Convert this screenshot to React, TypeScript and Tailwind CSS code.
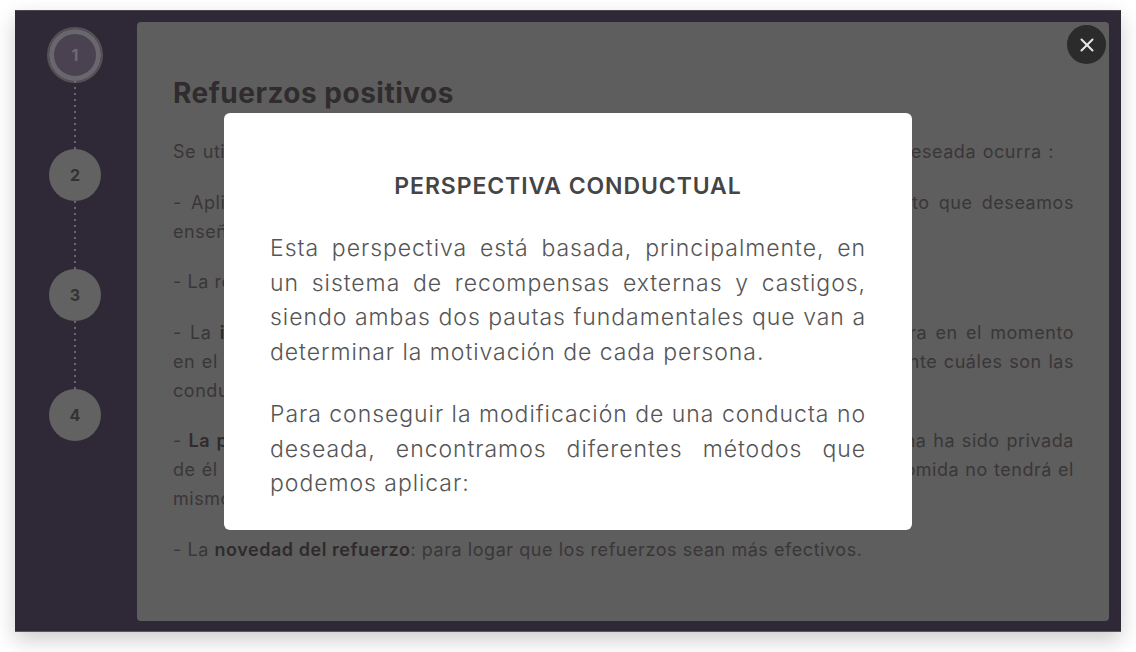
import { X } from 'lucide-react';

const steps = ['1', '2', '3', '4'];

// one entry per printed line, the middle of each one sits behind the modal
const paragraphs: { lines: string[][]; firstWidth?: boolean }[] = [
  { lines: [['Se utilizan para aumentar la probabilidad de que una conducta ya considerada deseada ocurra :']], firstWidth: true },
  {
    lines: [
      ['- Aplicar el refuerzo justo después de que se realice bien la conducta o hábito que deseamos'],
      ['enseñar.'],
    ],
  },
  { lines: [['- La regularidad del refuerzo.']] },
  {
    lines: [
      ['- La ', 'inmediatez', ' del refuerzo: debe darse justo después de la conducta, y ahora en el momento'],
      ['en el que esta sucede, de manera que el niño o la niña comprenda muy claramente cuáles son las'],
      ['conductas deseadas.'],
    ],
  },
  {
    lines: [
      ['- ', 'La privación', ' del refuerzo: el refuerzo será mucho más eficaz cuando la persona ha sido privada'],
      ['de él durante un tiempo; por ejemplo, un dulce para quien acaba de tomar una comida no tendrá el'],
      ['mismo valor.'],
    ],
  },
];

function Line({ parts, className }: { parts: string[]; className: string }) {
  return (
    <div className={className}>
      {parts[0]}
      {parts[1] && <b className="font-semibold text-[#2f2b2c]">{parts[1]}</b>}
      {parts[2]}
    </div>
  );
}

export default function App() {
  return (
    <div className="h-[652px] w-[1136px] overflow-hidden bg-white pt-[10px] pl-[15px] font-['Inter','Liberation_Sans',sans-serif]">
      <div className="relative flex h-[622px] w-[1106px] border-t border-b border-t-[#4c4652] border-b-[#5a5560] bg-[#2f2836] shadow-[0_8px_20px_rgba(0,0,0,0.2)]">
        <aside className="flex w-[120px] flex-col items-center pt-[18px]">
          {steps.map((s, i) => (
            <div key={s} className="flex flex-col items-center">
              {i === 0 ? (
                <div className="flex h-[52px] w-[52px] items-center justify-center rounded-full border-[5px] border-[#6a666d] bg-[#4a4250] text-[16px] font-bold text-[#6e6a72] outline-2 outline-[#565159]">
                  {s}
                </div>
              ) : (
                <div className="flex h-[52px] w-[52px] items-center justify-center rounded-full bg-[#626262] text-[16px] font-bold text-[#333]">
                  {s}
                </div>
              )}
              {i < 3 && (
                <div className="h-[68px] w-[2px] bg-[linear-gradient(#6b666e_2px,transparent_2px)] bg-[length:2px_6px]" />
              )}
            </div>
          ))}
        </aside>

        <main className="mt-[11px] mr-[12px] mb-[10px] ml-[2px] flex-1 rounded-[4px] bg-[#5e5e5e] pt-[53px] pr-[35px] pl-[36px] text-[18px] leading-[29px] tracking-[0.55px] text-[#3a3638]">
          <h1 className="mb-[26px] text-[28px] leading-[36px] font-bold tracking-[0.5px] text-[#302c2d]">Refuerzos positivos</h1>
          <div className="flex flex-col gap-[21.5px]">
            {paragraphs.map((p, i) => (
              <div key={i}>
                {p.lines.map((line, j) => {
                  const last = j === p.lines.length - 1;
                  return (
                    <Line
                      key={j}
                      parts={line}
                      className={p.firstWidth ? 'w-[881px] [text-align-last:justify]' : last ? '' : '[text-align-last:justify]'}
                    />
                  );
                })}
              </div>
            ))}
            <div>
              - La <b className="font-semibold text-[#2f2b2c]">novedad del refuerzo</b>: para logar que los refuerzos sean más efectivos.
            </div>
          </div>
        </main>

        <button className="absolute top-[14px] right-[15px] flex h-[39px] w-[39px] items-center justify-center rounded-full bg-[#2b2b2b] text-[#e4e4e4]">
          <X size={22} strokeWidth={2.25} />
        </button>

        <section className="absolute top-[102px] left-[209px] h-[417px] w-[688px] rounded-[6px] bg-white px-[46px] pt-[58px] text-[23px] leading-[34.5px] font-light tracking-[0.95px] text-[#555]">
          <h2 className="mb-[30px] text-center text-[23px] leading-[30px] font-semibold tracking-[0.9px] text-[#454545]">PERSPECTIVA CONDUCTUAL</h2>
          <p className="mb-[28px] text-justify">
            Esta perspectiva está basada, principalmente, en un sistema de recompensas externas y castigos, siendo ambas dos pautas fundamentales que van a determinar la motivación de cada persona.
          </p>
          <p className="text-justify">
            Para conseguir la modificación de una conducta no deseada, encontramos diferentes métodos que podemos aplicar:
          </p>
        </section>
      </div>
    </div>
  );
}
